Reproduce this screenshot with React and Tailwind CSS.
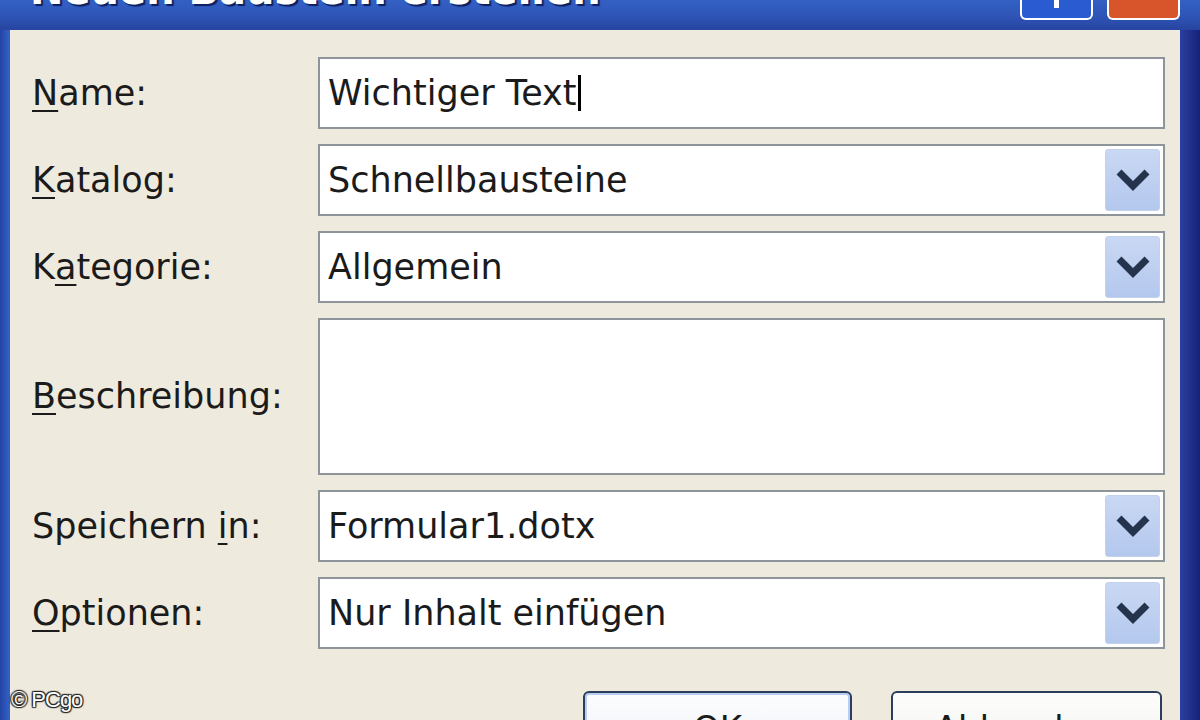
import React from "react";

// Dropdown arrow button like the XP combo box
const ComboArrow = () => (
   <div className="w-[55px] my-[3px] mr-[3px] rounded-[3px] bg-gradient-to-b from-[#c9d8f3] to-[#b4c8ee] border border-[#c3d2ec] flex items-center justify-center">
      <svg width="36" height="26" viewBox="0 0 36 26">
         <path d="M4 5 L18 19 L32 5" fill="none" stroke="#26334d" strokeWidth="7" strokeLinejoin="miter" />
      </svg>
   </div>
);

const Field = ({ value, combo, tall, caret }) => (
   <div
      className={`flex bg-white border-2 border-[#8d959b] ${tall ? "h-[157px]" : "h-[72px]"}`}
   >
      <div className="flex-1 flex items-center pl-[8px] text-[35px] text-[#1b1b1b] whitespace-pre">
         {value}
         {caret && <span className="inline-block w-[3px] h-[36px] bg-black ml-[1px]" />}
      </div>
      {combo && <ComboArrow />}
   </div>
);

const Label = ({ pre, ul, post, tall }) => (
   <div className={`flex items-center text-[35px] text-[#1b1b1b] whitespace-pre ${tall ? "h-[157px]" : "h-[72px]"}`}>
      {pre}
      <span className="underline decoration-2 underline-offset-[5px]">{ul}</span>
      {post}
   </div>
);

export default function App() {
   const rows = [
      { label: ["", "N", "ame:"], value: "Wichtiger Text", caret: true },
      { label: ["", "K", "atalog:"], value: "Schnellbausteine", combo: true },
      { label: ["K", "a", "tegorie:"], value: "Allgemein", combo: true },
      { label: ["", "B", "eschreibung:"], value: "", tall: true },
      { label: ["Speichern ", "i", "n:"], value: "Formular1.dotx", combo: true },
      { label: ["", "O", "ptionen:"], value: "Nur Inhalt einfügen", combo: true },
   ];

   return (
      <div
         className="relative w-[1200px] h-[720px] overflow-hidden flex flex-col bg-[#2c4cab]"
         style={{ fontFamily: "Tahoma, 'DejaVu Sans', sans-serif" }}
      >
         {/* Title bar */}
         <div className="h-[30px] shrink-0 flex bg-gradient-to-b from-[#3360c4] via-[#2f56b8] to-[#2744a0]">
            <div className="flex-1 pl-[30px] mt-[-40px] text-[40px] font-bold text-white [text-shadow:2px_2px_1px_#0d1f5e] whitespace-nowrap">
               Neuen Baustein erstellen
            </div>
            <div className="flex gap-[14px] pr-[20px]">
               <div className="w-[73px] h-[20px] rounded-b-[6px] border-2 border-t-0 border-white bg-[#2b5bd0] flex justify-center">
                  <div className="w-[5px] h-[8px] bg-white" />
               </div>
               <div className="w-[73px] h-[20px] rounded-b-[6px] border-2 border-t-0 border-white bg-[#d8552b]" />
            </div>
         </div>

         <div className="flex-1 flex">
            {/* Left frame */}
            <div className="w-[10px] bg-gradient-to-r from-[#2345a5] to-[#3462c8]" />

            {/* Dialog body */}
            <div className="flex-1 bg-[#eeeadd] pt-[27px] pl-[22px] pr-[15px]">
               <div className="grid grid-cols-[286px_1fr] gap-y-[15px]">
                  {rows.map((r, i) => (
                     <React.Fragment key={i}>
                        <Label pre={r.label[0]} ul={r.label[1]} post={r.label[2]} tall={r.tall} />
                        <Field value={r.value} combo={r.combo} tall={r.tall} caret={r.caret} />
                     </React.Fragment>
                  ))}
               </div>

               <div className="flex justify-end gap-[39px] mt-[42px] pr-[3px]">
                  <div className="w-[269px] h-[60px] rounded-[6px] border-2 border-[#2c3e5c] bg-gradient-to-b from-[#fdfdfd] to-[#eef3fb] ring-2 ring-inset ring-[#b8cdf0] flex justify-center pt-[10px] text-[34px] text-[#1b1b1b]">
                     OK
                  </div>
                  <div className="w-[271px] h-[60px] rounded-[6px] border-2 border-[#2c3e5c] bg-gradient-to-b from-[#fdfdfd] to-[#f3f3ef] flex justify-center pt-[10px] text-[34px] text-[#1b1b1b]">
                     Abbrechen
                  </div>
               </div>
            </div>

            {/* Right frame */}
            <div className="w-[20px] bg-gradient-to-r from-[#2a3fa0] to-[#17227a]" />
         </div>

         {/* Watermark */}
         <div
            className="absolute left-[11px] top-[683px] text-[22px] tracking-[-1px] text-white [text-shadow:1px_1px_1px_#222,-1px_-1px_1px_#222,1px_-1px_1px_#222,-1px_1px_1px_#222]"
            style={{ fontFamily: "'Liberation Sans', Arial, sans-serif" }}
         >
            © PCgo
         </div>
      </div>
   );
}
